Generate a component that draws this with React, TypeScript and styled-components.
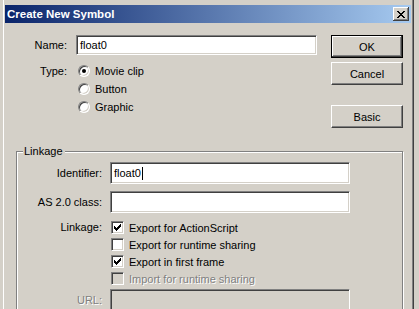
import styled, { createGlobalStyle } from 'styled-components'

const GlobalStyle = createGlobalStyle`
  html, body {
    margin: 0;
    padding: 0;
    background: #d4d0c8;
    overflow: hidden;
  }
  body {
    font-family: "Liberation Sans", Arial, sans-serif;
    font-size: 11px;
    color: #000;
  }
`

const Window = styled.div`
  width: 414px;
  height: 309px;
  overflow: hidden;
  box-sizing: border-box;
  padding: 5px 3px 0 4px;
  background: #d4d0c8;
  box-shadow: inset 3px 0 0 #d4d0c8, inset 4px 0 0 #fff, inset -1px 0 0 #404040, inset -2px 0 0 #808080;
`

const TitleBar = styled.div`
  height: 18px;
  margin: 0 0 1px 1px;
  display: flex;
  align-items: center;
  justify-content: space-between;
  padding: 0 2px 0 2px;
  background: linear-gradient(to right, #0a246a, #a6caf0);
`

const Title = styled.span`
  color: #fff;
  font-weight: bold;
  font-size: 11.5px;
  line-height: 18px;
`

const CloseButton = styled.div`
  width: 16px;
  height: 14px;
  box-sizing: border-box;
  background: #d4d0c8;
  display: flex;
  align-items: center;
  justify-content: center;
  box-shadow: inset -1px -1px 0 #404040, inset 1px 1px 0 #fff, inset -2px -2px 0 #808080;
`

const Top = styled.div`
  display: flex;
  padding-top: 11px;
`

const Form = styled.div`
  display: grid;
  grid-template-columns: 63px 241px;
  column-gap: 9px;
  row-gap: 7px;
  align-content: start;
`

const Label = styled.div<{ $disabled?: boolean }>`
  text-align: right;
  line-height: 18px;
  white-space: nowrap;
  color: ${p => (p.$disabled ? '#808080' : '#000')};
  text-shadow: ${p => (p.$disabled ? '1px 1px 0 #fff' : 'none')};
`

const FieldLabel = styled(Label)<{ $h: number; $top?: number }>`
  line-height: ${p => p.$h}px;
  margin-top: ${p => p.$top ?? 0}px;
`

const Field = styled.div<{ $h: number; $disabled?: boolean; $top?: number }>`
  height: ${p => p.$h}px;
  margin-top: ${p => p.$top ?? 0}px;
  box-sizing: border-box;
  background: ${p => (p.$disabled ? '#d4d0c8' : '#fff')};
  border-style: solid;
  border-width: 1px;
  border-color: #808080 #fff #fff #808080;
  box-shadow: inset 1px 1px 0 #404040, inset -1px -1px 0 #d4d0c8;
  padding: 0 3px;
  display: flex;
  align-items: center;
  white-space: nowrap;
`

const Caret = styled.span`
  display: inline-block;
  width: 1px;
  height: 13px;
  background: #000;
  margin-left: 1px;
`

const OptionList = styled.div<{ $rowH: number }>`
  display: grid;
  grid-auto-rows: ${p => p.$rowH}px;
`

const Option = styled.div<{ $disabled?: boolean }>`
  display: flex;
  align-items: center;
  gap: 5px;
  white-space: nowrap;
  color: ${p => (p.$disabled ? '#808080' : '#000')};
  text-shadow: ${p => (p.$disabled ? '1px 1px 0 #fff' : 'none')};
`

const RadioDot = styled.span<{ $on?: boolean }>`
  width: 12px;
  height: 12px;
  margin-left: 2px;
  box-sizing: border-box;
  border-radius: 50%;
  border: 1px solid;
  border-color: #808080 #fff #fff #808080;
  box-shadow: inset 1px 1px 0 #404040, inset -1px -1px 0 #d4d0c8;
  background: #fff;
  display: flex;
  align-items: center;
  justify-content: center;

  &::after {
    content: '';
    width: 4px;
    height: 4px;
    border-radius: 50%;
    background: ${p => (p.$on ? '#000' : 'transparent')};
  }
`

const CheckBox = styled.span<{ $disabled?: boolean }>`
  width: 13px;
  height: 13px;
  margin-left: 1px;
  box-sizing: border-box;
  border: 1px solid;
  border-color: #808080 #fff #fff #808080;
  box-shadow: inset 1px 1px 0 #404040, inset -1px -1px 0 #d4d0c8;
  background: ${p => (p.$disabled ? '#d4d0c8' : '#fff')};
  display: flex;
  align-items: center;
  justify-content: center;
  flex: none;
`

const Buttons = styled.div`
  margin-left: 14px;
  width: 72px;
  display: flex;
  flex-direction: column;
`

const Button = styled.div<{ $default?: boolean; $gap?: number }>`
  height: 23px;
  margin-top: ${p => p.$gap ?? 0}px;
  box-sizing: border-box;
  display: flex;
  align-items: center;
  justify-content: center;
  background: #d4d0c8;
  border: 1px solid ${p => (p.$default ? '#000' : 'transparent')};
  box-shadow: ${p =>
    p.$default
      ? 'inset -1px -1px 0 #404040, inset 1px 1px 0 #fff, inset -2px -2px 0 #808080'
      : 'inset -1px -1px 0 #808080, inset 1px 1px 0 #d4d0c8'};
  ${p => (p.$default ? '' : 'border-color: #fff #404040 #404040 #fff;')}
`

const GroupBox = styled.div`
  position: relative;
  margin: 23px 0 0 12px;
  width: 387px;
  height: 170px;
  box-sizing: border-box;
  border: 1px solid #808080;
  box-shadow: inset 1px 1px 0 #fff, 1px 1px 0 #fff;
  padding-top: 10px;
`

const Legend = styled.span`
  position: absolute;
  top: -8px;
  left: 6px;
  padding: 0 2px 0 1px;
  background: #d4d0c8;
  line-height: 14px;
`

const LinkGrid = styled.div`
  display: grid;
  grid-template-columns: 85px 240px;
  column-gap: 8px;
  row-gap: 7px;
  align-items: start;
`

const CheckRows = styled(OptionList)`
  margin-top: -1px;
`

const Check = () => (
  <svg width="7" height="7" viewBox="0 0 7 7" shapeRendering="crispEdges">
    <path d="M6 0h1v3h-1zM5 1h1v3h-1zM4 2h1v3h-1zM3 3h1v3h-1zM2 4h1v3h-1zM1 3h1v3h-1zM0 2h1v3h-1z" fill="#000" />
  </svg>
)

const CloseIcon = () => (
  <svg width="8" height="7" viewBox="0 0 8 7" shapeRendering="crispEdges">
    <path d="M0 0h2v1h-2zM6 0h2v1h-2zM1 1h2v1h-2zM5 1h2v1h-2zM2 2h4v1h-4zM3 3h2v1h-2zM2 4h4v1h-4zM1 5h2v1h-2zM5 5h2v1h-2zM0 6h2v1h-2zM6 6h2v1h-2z" fill="#000" />
  </svg>
)

export default function App() {
  return (
    <>
      <GlobalStyle />
      <Window>
        <TitleBar>
          <Title>Create New Symbol</Title>
          <CloseButton>
            <CloseIcon />
          </CloseButton>
        </TitleBar>

        <Top>
          <Form>
            <FieldLabel $h={20}>Name:</FieldLabel>
            <Field $h={20}>float0</Field>
            <Label>Type:</Label>
            <OptionList $rowH={18}>
              <Option>
                <RadioDot $on />
                Movie clip
              </Option>
              <Option>
                <RadioDot />
                Button
              </Option>
              <Option>
                <RadioDot />
                Graphic
              </Option>
            </OptionList>
          </Form>

          <Buttons>
            <Button $default>OK</Button>
            <Button $gap={4}>Cancel</Button>
            <Button $gap={20}>Basic</Button>
          </Buttons>
        </Top>

        <GroupBox>
          <Legend>Linkage</Legend>
          <LinkGrid>
            <FieldLabel $h={22}>Identifier:</FieldLabel>
            <Field $h={22}>
              float0
              <Caret />
            </Field>
            <FieldLabel $h={22}>AS 2.0 class:</FieldLabel>
            <Field $h={22} />
            <FieldLabel $h={17} $top={-1}>Linkage:</FieldLabel>
            <CheckRows $rowH={17}>
              <Option>
                <CheckBox>
                  <Check />
                </CheckBox>
                Export for ActionScript
              </Option>
              <Option>
                <CheckBox />
                Export for runtime sharing
              </Option>
              <Option>
                <CheckBox>
                  <Check />
                </CheckBox>
                Export in first frame
              </Option>
              <Option $disabled>
                <CheckBox $disabled />
                Import for runtime sharing
              </Option>
            </CheckRows>
            <FieldLabel $h={22} $top={-5} $disabled>
              URL:
            </FieldLabel>
            <Field $h={22} $top={-5} $disabled />
          </LinkGrid>
        </GroupBox>
      </Window>
    </>
  )
}
